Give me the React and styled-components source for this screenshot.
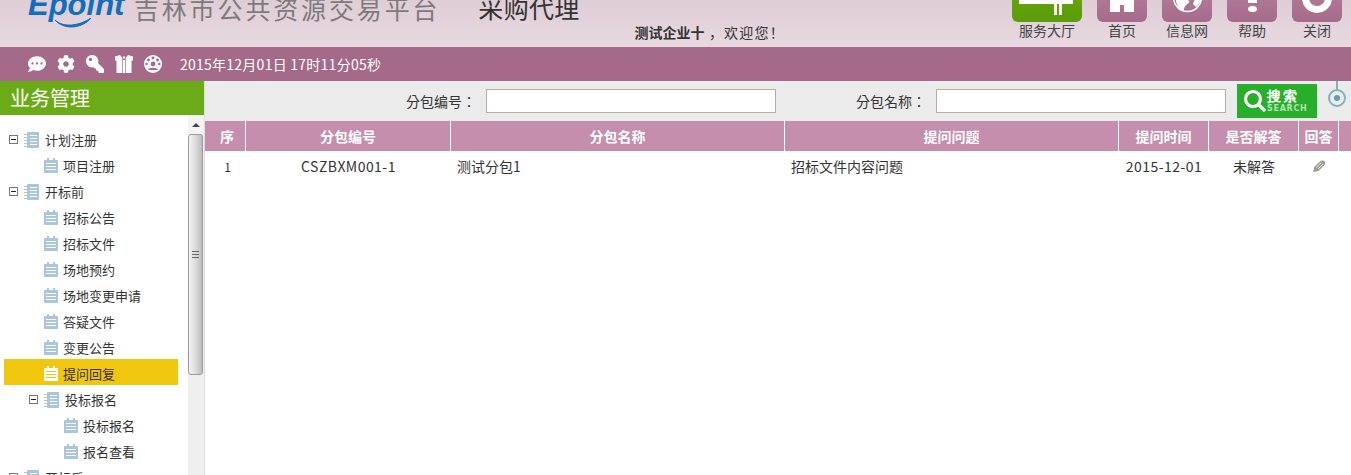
import styled, { createGlobalStyle } from 'styled-components';
import { FaCog, FaCommentDots, FaKey } from 'react-icons/fa';

const TREE = [
  { label: '计划注册', depth: 0, folder: true },
  { label: '项目注册', depth: 1 },
  { label: '开标前', depth: 0, folder: true },
  { label: '招标公告', depth: 1 },
  { label: '招标文件', depth: 1 },
  { label: '场地预约', depth: 1 },
  { label: '场地变更申请', depth: 1 },
  { label: '答疑文件', depth: 1 },
  { label: '变更公告', depth: 1 },
  { label: '提问回复', depth: 1, active: true },
  { label: '投标报名', depth: 2, folder: true },
  { label: '投标报名', depth: 3 },
  { label: '报名查看', depth: 3 },
  { label: '开标后', depth: 0, folder: true },
];

const COLUMNS = [
  { title: '序', width: 41 },
  { title: '分包编号', width: 205 },
  { title: '分包名称', width: 334 },
  { title: '提问问题', width: 334 },
  { title: '提问时间', width: 90 },
  { title: '是否解答', width: 90 },
  { title: '回答', width: 40 },
];

const TEMPLATE = COLUMNS.map((c) => `${c.width}px`).join(' ') + ' 1fr';

const TOOLS = [
  { label: '服务大厅', wide: true, icon: <SignIcon /> },
  { label: '首页', icon: <HomeIcon /> },
  { label: '信息网', icon: <GlobeIcon /> },
  { label: '帮助', icon: <HelpIcon /> },
  { label: '关闭', icon: <PowerIcon /> },
];

function SignIcon() {
  return (
    <svg width="70" height="50" viewBox="0 0 70 50" fill="#fff">
      <rect x="7" y="22" width="54" height="10" />
      <rect x="42" y="32" width="3" height="11" />
      <rect x="47" y="32" width="3" height="11" />
      <rect x="42" y="14" width="8" height="8" />
    </svg>
  );
}

function HomeIcon() {
  return (
    <svg width="50" height="50" viewBox="0 0 50 50" fill="#fff">
      <path d="M25 10 L40 24 H37 V33 H13 V24 H10 Z" />
      <rect x="13" y="30" width="10" height="10" />
      <rect x="27" y="30" width="10" height="10" />
    </svg>
  );
}

function GlobeIcon() {
  return (
    <svg width="50" height="50" viewBox="0 0 50 50">
      <circle cx="25.5" cy="25.5" r="14" fill="none" stroke="#fff" strokeWidth="1.5" />
      <path d="M14 24 C18 24 22 26 26 28 C29 30 26 32 24 33 C22 36 21 38 22 39 C17 37 13 32 14 24 Z" fill="#fff" />
      <path d="M29 20 L39 22 C40 27 38 32 34 35 L31 32 L33 27 Z" fill="#fff" />
    </svg>
  );
}

function HelpIcon() {
  return (
    <svg width="50" height="50" viewBox="0 0 50 50" fill="#fff">
      <rect x="21" y="18" width="9" height="13" />
      <ellipse cx="25.5" cy="37" rx="4.5" ry="3" />
    </svg>
  );
}

function PowerIcon() {
  return (
    <svg width="50" height="50" viewBox="0 0 50 50">
      <circle cx="25" cy="26" r="11.5" fill="none" stroke="#fff" strokeWidth="7" />
    </svg>
  );
}

function GiftIcon() {
  return (
    <svg width="18" height="18" viewBox="0 0 18 18" fill="#fff">
      <path d="M0 1.5 L5 0 L7.3 3 L7.3 18 H1.5 V5.5 L0 5.5 Z" />
      <path d="M18 1.5 L13 0 L10.7 3 L10.7 18 H16.5 V5.5 L18 5.5 Z" />
      <rect x="8" y="1.5" width="2" height="2" />
      <rect x="8" y="5" width="2" height="13" />
    </svg>
  );
}

function BadgeIcon() {
  return (
    <svg width="18" height="18" viewBox="0 0 18 18">
      <circle cx="9" cy="9" r="9" fill="#fff" />
      <circle cx="9" cy="3" r="1.4" fill="#a56a8a" />
      <circle cx="4.5" cy="5" r="1.4" fill="#a56a8a" />
      <circle cx="13.5" cy="5" r="1.4" fill="#a56a8a" />
      <circle cx="2.6" cy="9" r="1.2" fill="#a56a8a" />
      <circle cx="15.4" cy="9" r="1.2" fill="#a56a8a" />
      <circle cx="9" cy="9" r="2.4" fill="#a56a8a" />
      <path d="M4 15 C5 12 13 12 14 15 Z" fill="#a56a8a" />
    </svg>
  );
}

function FolderIcon() {
  return (
    <svg width="16" height="16" viewBox="0 0 16 16">
      <rect x="3" y="0" width="12" height="16" rx="1" fill="#a9c6da" />
      <g fill="#fff">
        <rect x="6" y="3" width="7" height="1" />
        <rect x="6" y="6" width="7" height="1" />
        <rect x="6" y="9" width="7" height="1" />
        <rect x="6" y="12" width="7" height="1" />
      </g>
      <g fill="#a9c6da">
        <rect x="0" y="2" width="3" height="1" />
        <rect x="0" y="5" width="3" height="1" />
        <rect x="0" y="8" width="3" height="1" />
        <rect x="0" y="11" width="3" height="1" />
        <rect x="0" y="14" width="3" height="1" />
      </g>
    </svg>
  );
}

function LeafIcon({ active }) {
  const tone = active ? '#fff' : '#a9c6da';
  const line = active ? '#f0c60f' : '#fff';
  return (
    <svg width="14" height="15" viewBox="0 0 14 15">
      <rect x="0" y="2" width="14" height="13" rx="1" fill={tone} />
      <rect x="3" y="0" width="2" height="4" fill={tone} />
      <rect x="9" y="0" width="2" height="4" fill={tone} />
      <rect x="2" y="5" width="10" height="1" fill={line} />
      <rect x="2" y="8" width="10" height="1" fill={line} />
      <rect x="2" y="11" width="10" height="1" fill={line} />
    </svg>
  );
}

function App() {
  return (
    <>
      <GlobalStyle />
      <Page>
        <Header>
          <Logo>
            Epoint
            <Swoosh width="38" height="12" viewBox="0 0 38 12">
              <path d="M0 2 C8 10 24 8 36 0 C28 10 10 13 0 2 Z" fill="#0d6fbe" stroke="#0d6fbe" />
            </Swoosh>
          </Logo>
          <PlatformTitle>吉林市公共资源交易平台</PlatformTitle>
          <RoleTitle>采购代理</RoleTitle>
          <Welcome>
            <b>测试企业十</b> ，欢迎您！
          </Welcome>
          <Toolbar>
            {TOOLS.map((tool) => (
              <Tool key={tool.label}>
                <ToolButton $wide={tool.wide}>{tool.icon}</ToolButton>
                <ToolLabel>{tool.label}</ToolLabel>
              </Tool>
            ))}
          </Toolbar>
        </Header>

        <NavBar>
          <NavIcons>
            <FaCommentDots size={18} />
            <FaCog size={18} />
            <FlippedKey size={18} />
            <GiftIcon />
            <BadgeIcon />
          </NavIcons>
          <DateText>2015年12月01日 17时11分05秒</DateText>
        </NavBar>

        <Body>
          <Sidebar>
            <SideTitle>业务管理</SideTitle>
            <SideBody>
              <Tree>
                {TREE.map((item, i) => (
                  <TreeRow key={i} $depth={item.depth} $folder={item.folder} $active={item.active}>
                    {item.folder && <Expander />}
                    {item.folder ? <FolderIcon /> : <LeafIcon active={item.active} />}
                    <span>{item.label}</span>
                  </TreeRow>
                ))}
              </Tree>
              <Scrollbar>
                <ScrollArrow />
                <ScrollThumb>
                  <ScrollGrip />
                </ScrollThumb>
              </Scrollbar>
            </SideBody>
          </Sidebar>

          <Main>
            <SearchBar>
              <FieldLabel>分包编号：</FieldLabel>
              <SearchInput type="text" />
              <FieldLabel>分包名称：</FieldLabel>
              <SearchInput type="text" />
              <SearchButton type="button">
                <svg width="24" height="26" viewBox="0 0 24 26" fill="none" stroke="#fff">
                  <circle cx="10" cy="11" r="7.5" strokeWidth="3.2" />
                  <path d="M15.5 16.5 L22 23" strokeWidth="3.2" />
                </svg>
                <SearchText>
                  <strong>搜索</strong>
                  <small>SEARCH</small>
                </SearchText>
              </SearchButton>
              <Pin>
                <PinDot />
              </Pin>
            </SearchBar>

            <HeadRow>
              {COLUMNS.map((c) => (
                <HeadCell key={c.title}>{c.title}</HeadCell>
              ))}
              <HeadCell />
            </HeadRow>
            <DataRow>
              <Cell $center $small>1</Cell>
              <Cell $center $latin>CSZBXM001-1</Cell>
              <Cell>测试分包1</Cell>
              <Cell>招标文件内容问题</Cell>
              <Cell $center $latin>2015-12-01</Cell>
              <Cell $center>未解答</Cell>
              <Cell $center>
                <svg width="14" height="13" viewBox="0 0 14 13">
                  <path d="M1 12 L2.5 6.5 L8.5 1 C10 0 12.5 0.5 13 2 C13.5 3.5 13 4.5 12 5.5 L6.5 11 Z" fill="#9c9c94" />
                  <path d="M4 7.5 L9.5 2.5 M6 9 L11 4" stroke="#fff" strokeWidth="0.8" />
                </svg>
              </Cell>
            </DataRow>
          </Main>
        </Body>
      </Page>
    </>
  );
}

const FONT = `"Noto Sans CJK SC", sans-serif`;

const GlobalStyle = createGlobalStyle`
  html, body {
    margin: 0;
    height: 100%;
    overflow: hidden;
    background: #fff;
  }

  * {
    box-sizing: border-box;
  }
`;

const Page = styled.div`
  height: 475px;
  display: flex;
  flex-direction: column;
  overflow: hidden;
  font-family: ${FONT};
  font-size: 14px;
  color: #333;
`;

const Header = styled.header`
  flex: 0 0 47px;
  display: flex;
  align-items: flex-end;
  overflow: hidden;
  padding: 0 9px 0 28px;
  background: linear-gradient(#dfcdd6, #e7d8e0);
`;

const Logo = styled.div`
  position: relative;
  width: 96px;
  margin-bottom: 27px;
  font: italic bold 31px/1 "Liberation Sans", sans-serif;
  color: #0d6fbe;
`;

const Swoosh = styled.svg`
  position: absolute;
  left: 27px;
  top: 29px;
`;

const PlatformTitle = styled.div`
  margin: 0 0 21px 10px;
  font-size: 25px;
  line-height: 36px;
  letter-spacing: 2.85px;
  white-space: nowrap;
  color: #7d7a7c;
`;

const RoleTitle = styled.div`
  margin: 0 0 22px 38px;
  font-size: 25px;
  line-height: 36px;
  letter-spacing: 0.3px;
  white-space: nowrap;
  color: #333;
`;

const Welcome = styled.div`
  margin: 0 0 5px 55px;
  font-size: 14px;
  line-height: 20px;
  letter-spacing: 1.2px;
  white-space: nowrap;

  b {
    font-size: 14px;
    letter-spacing: 0;
  }
`;

const Toolbar = styled.nav`
  display: flex;
  gap: 15px;
  margin-left: auto;
  padding-bottom: 9px;
`;

const Tool = styled.div`
  display: flex;
  flex-direction: column;
  align-items: center;
`;

const ToolButton = styled.div`
  width: ${({ $wide }) => ($wide ? '70px' : '50px')};
  height: 50px;
  display: flex;
  border-radius: 0 0 6px 6px;
  background: ${({ $wide }) =>
    $wide ? 'linear-gradient(#6eae0b, #5b9a0a)' : 'linear-gradient(#b98aa3, #a56a8a)'};
`;

const ToolLabel = styled.span`
  height: 16px;
  font-size: 14px;
  line-height: 16px;
  color: #444;
`;

const NavBar = styled.div`
  flex: 0 0 34px;
  display: flex;
  align-items: center;
  padding-left: 28px;
  background: #a56a8a;
  color: #fff;
`;

const NavIcons = styled.div`
  display: flex;
  align-items: center;
  gap: 11px;
`;

const FlippedKey = styled(FaKey)`
  transform: scaleX(-1);
`;

const DateText = styled.span`
  margin-left: 18px;
  font-size: 14px;
  letter-spacing: 0.25px;
  white-space: nowrap;
`;

const Body = styled.div`
  flex: 1;
  min-height: 0;
  display: flex;
`;

const Sidebar = styled.aside`
  flex: 0 0 205px;
  display: flex;
  flex-direction: column;
  min-height: 0;
  border-right: 1px solid #e6d8e0;
`;

const SideTitle = styled.div`
  flex: 0 0 34px;
  padding-left: 10px;
  background: #6aab17;
  color: #fff;
  font-size: 20px;
  line-height: 34px;
`;

const SideBody = styled.div`
  flex: 1;
  min-height: 0;
  display: flex;
  overflow: hidden;
`;

const Tree = styled.ul`
  flex: 0 0 188px;
  margin: 0;
  padding: 10px 10px 0 4px;
  list-style: none;
`;

const TreeRow = styled.li`
  height: 26px;
  display: flex;
  align-items: center;
  padding-top: 3px;
  padding-left: ${({ $depth, $folder }) =>
    $folder ? ($depth === 0 ? 5 : 25) : $depth === 1 ? 40 : 60}px;
  gap: 5px;
  background: ${({ $active }) => ($active ? '#f0c60f' : 'transparent')};
  font-size: 13px;
  color: #333;
  white-space: nowrap;
`;

const Expander = styled.i`
  position: relative;
  flex: 0 0 9px;
  height: 9px;
  margin-right: 1px;
  border: 1px solid #777;

  &::after {
    content: '';
    position: absolute;
    left: 1px;
    right: 1px;
    top: 3px;
    height: 1px;
    background: #222;
  }
`;

const Scrollbar = styled.div`
  flex: 0 0 16px;
  display: flex;
  flex-direction: column;
  background: #efefef;
`;

const ScrollArrow = styled.div`
  height: 19px;
  display: flex;
  align-items: center;
  justify-content: center;
  background: #f4f4f4;

  &::before {
    content: '';
    border: 4px solid transparent;
    border-top: 0;
    border-bottom: 4px solid #444;
  }
`;

const ScrollThumb = styled.div`
  width: 15px;
  height: 241px;
  display: flex;
  align-items: center;
  justify-content: center;
  border: 1px solid #9b9b9b;
  border-radius: 3px;
  background: linear-gradient(90deg, #f4f4f4, #d8d8d8 55%, #bcbcbc);
`;

const ScrollGrip = styled.div`
  width: 7px;
  height: 7px;
  background: repeating-linear-gradient(#666 0 1px, transparent 1px 3px);
`;

const Main = styled.main`
  flex: 1;
  min-width: 0;
`;

const SearchBar = styled.div`
  position: relative;
  height: 40px;
  display: flex;
  align-items: center;
  padding-left: 201px;
  background: #ecebec;
`;

const FieldLabel = styled.label`
  width: 80px;
  font-family: "Noto Sans CJK TC", sans-serif;
  font-size: 14px;
  white-space: nowrap;
`;

const SearchInput = styled.input`
  width: 290px;
  height: 24px;
  margin-right: 80px;
  padding: 0 4px;
  border: 1px solid #b8b09c;
  background: #fff;
  outline: none;

  & + label + & {
    margin-right: 11px;
  }
`;

const SearchButton = styled.button`
  width: 80px;
  height: 34px;
  display: flex;
  align-items: center;
  gap: 0;
  padding: 0 0 0 6px;
  border: 0;
  background: #27ae2a;
  color: #fff;
`;

const SearchText = styled.span`
  display: flex;
  flex-direction: column;
  align-items: flex-start;

  strong {
    font-size: 14px;
    line-height: 15px;
    letter-spacing: 2px;
  }

  small {
    font: bold 8px/9px "DejaVu Sans", sans-serif;
    letter-spacing: 0.7px;
    color: #b5e3b0;
  }
`;

const Pin = styled.div`
  position: absolute;
  left: 1123px;
  top: 8px;
  width: 18px;
  height: 18px;
  display: flex;
  align-items: center;
  justify-content: center;
  border: 2px solid #7fb3b8;
  border-radius: 50%;

  &::before {
    content: '';
    position: absolute;
    left: 6px;
    top: -10px;
    width: 2px;
    height: 8px;
    background: #7fb3b8;
  }
`;

const PinDot = styled.i`
  width: 6px;
  height: 6px;
  border-radius: 50%;
  background: #5d9fb0;
`;

const HeadRow = styled.div`
  height: 30px;
  display: grid;
  grid-template-columns: ${TEMPLATE};
  background: #c48eac;
`;

const HeadCell = styled.div`
  border-right: 1px solid #fff;
  color: #fff;
  font-size: 14px;
  font-weight: bold;
  line-height: 30px;
  text-align: center;

  &:first-child {
    padding-left: 4px;
  }

  &:last-child {
    border-right: 0;
  }
`;

const DataRow = styled.div`
  height: 30px;
  display: grid;
  grid-template-columns: ${TEMPLATE};
`;

const Cell = styled.div`
  display: flex;
  align-items: center;
  justify-content: ${({ $center }) => ($center ? 'center' : 'flex-start')};
  padding: 0 6px;
  font-size: ${({ $small }) => ($small ? '12px' : '14px')};
  letter-spacing: ${({ $latin }) => ($latin ? '0.45px' : '0')};
  color: #333;
  white-space: nowrap;

  &:first-child {
    padding-left: 10px;
  }
`;

export default App;
